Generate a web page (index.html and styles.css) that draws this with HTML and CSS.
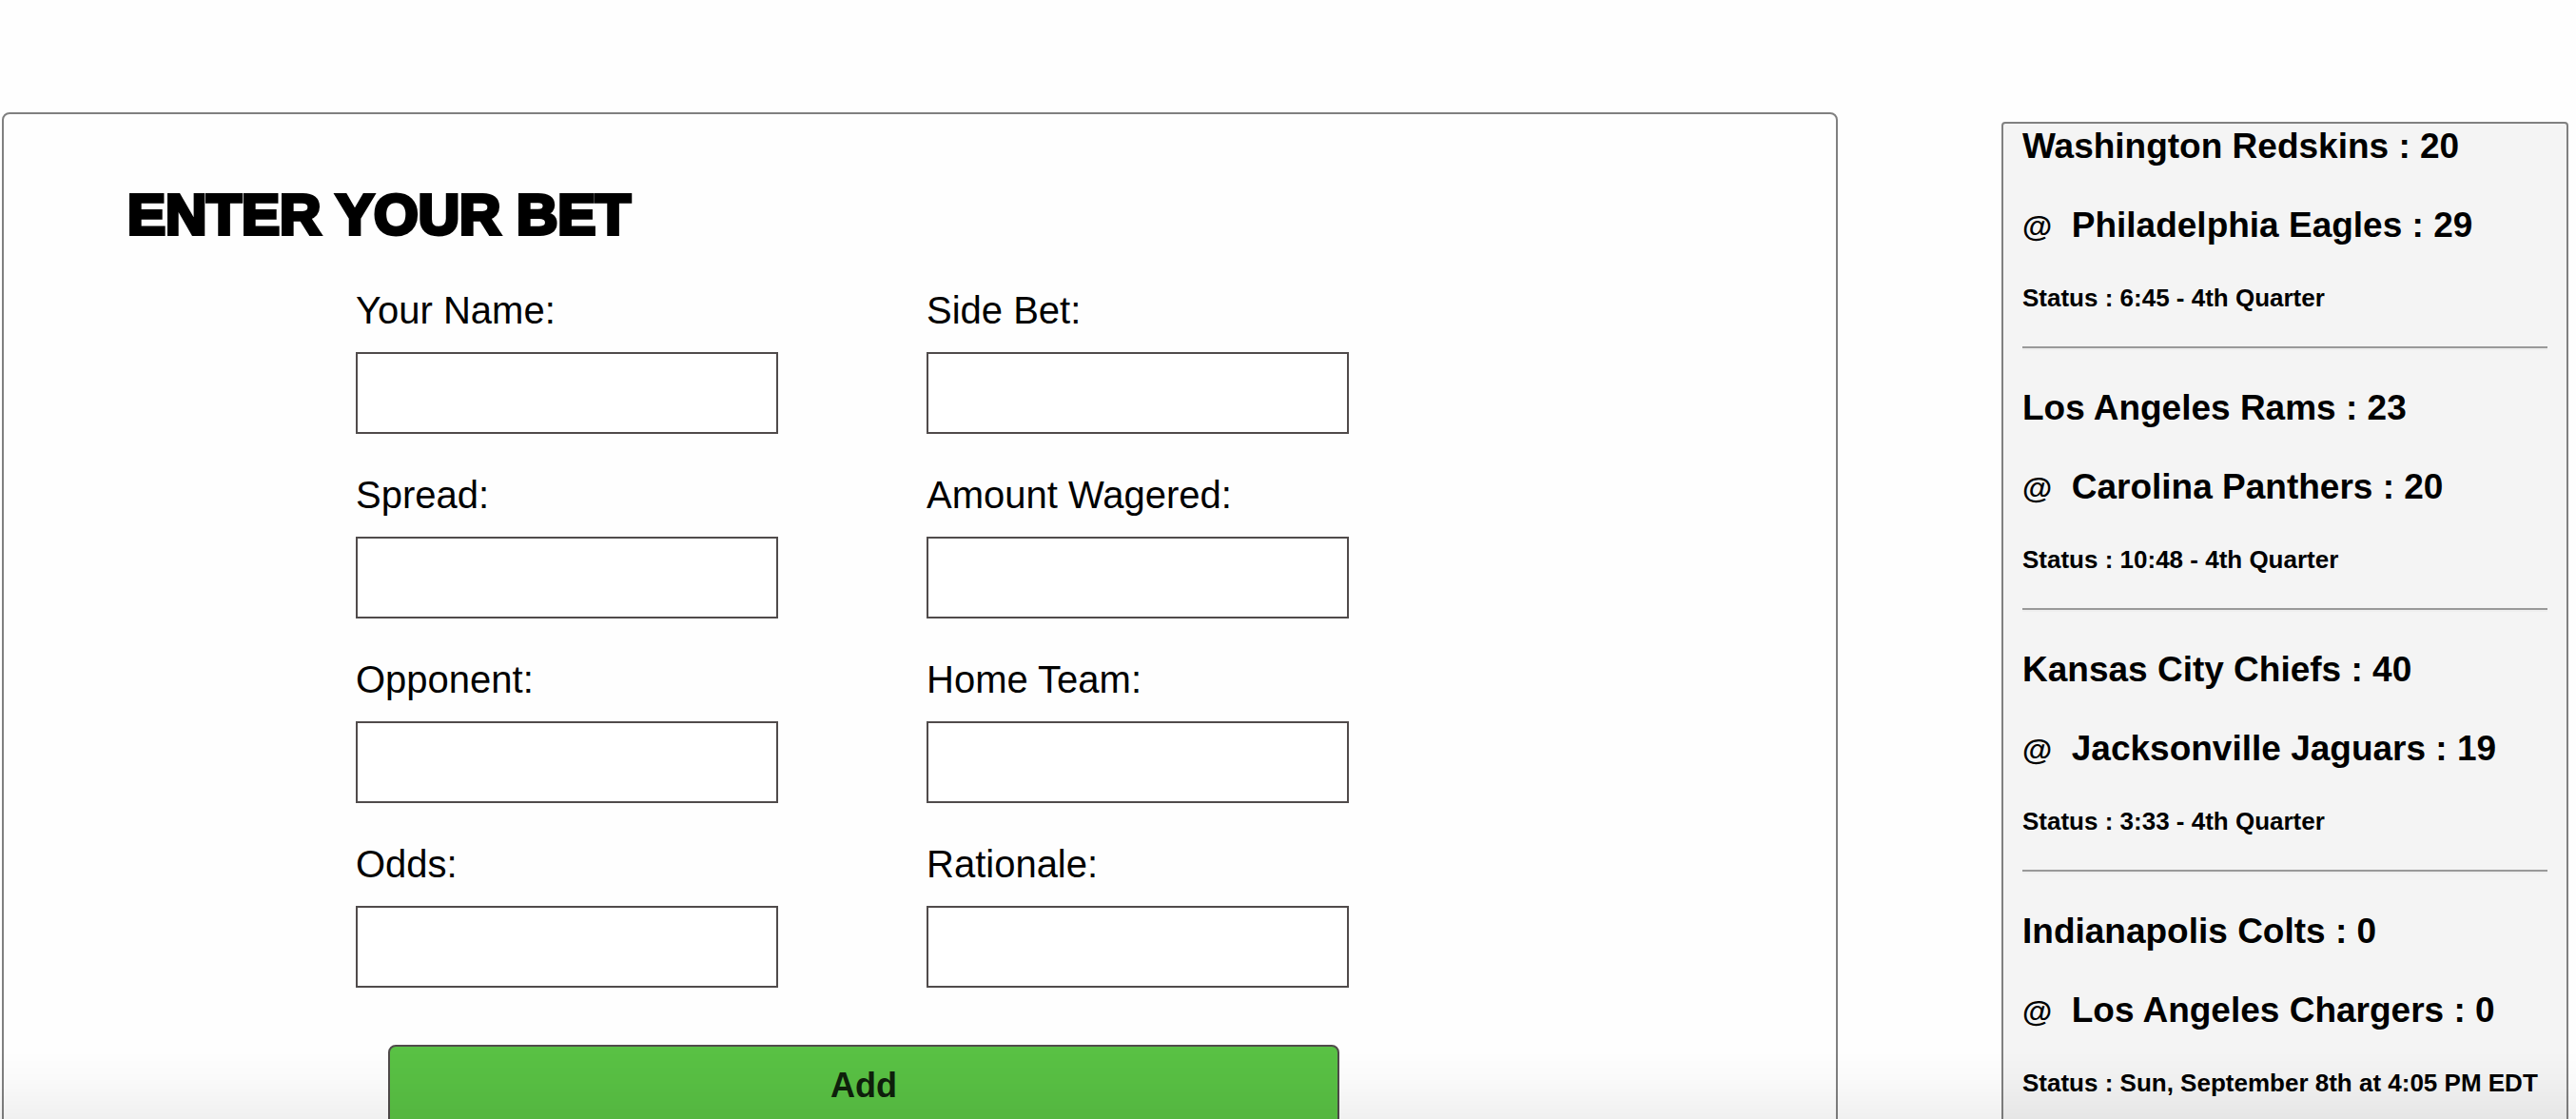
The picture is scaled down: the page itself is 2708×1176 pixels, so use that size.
FILE: index.html
```html
<!DOCTYPE html>
<html lang="en">
<head>
<meta charset="utf-8">
<meta name="viewport" content="width=device-width, initial-scale=1">
<title>Enter Your Bet</title>
<link rel="stylesheet" href="styles.css">
</head>
<body>
<div class="page">
  <main class="bet-card">
    <h1 class="bet-title">ENTER YOUR BET</h1>
    <form class="bet-form">
      <div class="fields">
        <div class="field"><label for="name">Your Name:</label><input id="name" type="text"></div>
        <div class="field"><label for="side">Side Bet:</label><input id="side" type="text"></div>
        <div class="field"><label for="spread">Spread:</label><input id="spread" type="text"></div>
        <div class="field"><label for="amount">Amount Wagered:</label><input id="amount" type="text"></div>
        <div class="field"><label for="opponent">Opponent:</label><input id="opponent" type="text"></div>
        <div class="field"><label for="home">Home Team:</label><input id="home" type="text"></div>
        <div class="field"><label for="odds">Odds:</label><input id="odds" type="text"></div>
        <div class="field"><label for="rationale">Rationale:</label><input id="rationale" type="text"></div>
      </div>
      <button class="add-button" type="button">Add</button>
    </form>
  </main>
  <aside class="scores">
    <section class="game">
      <h3>Washington Redskins : 20</h3>
      <h3><span class="at">@</span> &nbsp;Philadelphia Eagles : 29</h3>
      <h5>Status : 6:45 - 4th Quarter</h5>
      <hr>
    </section>
    <section class="game">
      <h3>Los Angeles Rams : 23</h3>
      <h3><span class="at">@</span> &nbsp;Carolina Panthers : 20</h3>
      <h5>Status : 10:48 - 4th Quarter</h5>
      <hr>
    </section>
    <section class="game">
      <h3>Kansas City Chiefs : 40</h3>
      <h3><span class="at">@</span> &nbsp;Jacksonville Jaguars : 19</h3>
      <h5>Status : 3:33 - 4th Quarter</h5>
      <hr>
    </section>
    <section class="game">
      <h3>Indianapolis Colts : 0</h3>
      <h3><span class="at">@</span> &nbsp;Los Angeles Chargers : 0</h3>
      <h5>Status : Sun, September 8th at 4:05 PM EDT</h5>
      <hr>
    </section>
  </aside>
</div>
</body>
</html>
```
FILE: styles.css
```css
* {
  box-sizing: border-box;
}

body {
  margin: 0;
  height: 100vh;
  overflow: auto;
  scrollbar-width: none;
  background: #fefefe;
  color: #000;
  font-family: "Liberation Sans", Arial, sans-serif;
}

/* soft shade along the bottom edge of the window */
body::after {
  content: "";
  position: fixed;
  inset: auto 0 0 0;
  height: 72px;
  background: linear-gradient(rgba(0, 0, 0, 0), rgba(0, 0, 0, 0.015) 40%, rgba(0, 0, 0, 0.055));
  pointer-events: none;
}

.page {
  display: grid;
  grid-template-columns: 1930fr 596fr;
  column-gap: 172px;
  align-items: start;
  padding: 118px 8px 40px 2px;
}

.bet-card {
  padding: 70px 130px 60px;
  border: 2px solid #808080;
  border-radius: 8px;
}

.bet-title {
  margin: 0;
  font-size: 60px;
  font-weight: 700;
  line-height: 72px;
  -webkit-text-stroke: 4px #000;
}

.bet-form {
  padding: 42px 0 0 240px;
}

.fields {
  display: grid;
  grid-template-columns: repeat(2, 444px);
  column-gap: 156px;
  row-gap: 42px;
}

.field {
  display: flex;
  flex-direction: column;
  gap: 22px;
}

.field label {
  font-size: 40px;
  line-height: 44px;
}

.field input {
  height: 86px;
  padding: 0 20px;
  border: 2px solid #504b4b;
  background: #fff;
  font: 36px "Liberation Sans", Arial, sans-serif;
}

.add-button {
  display: block;
  width: 1000px;
  height: 86px;
  margin: 60px 0 0 34px;
  border: 2px solid #504b4b;
  border-radius: 8px;
  background: #59c144;
  color: #0f210c;
  font: bold 36px "Liberation Sans", Arial, sans-serif;
}

.scores {
  margin-top: 10px;
  padding: 2px 20px 20px;
  border: 2px solid #808080;
  border-radius: 4px;
  background: #f4f4f4;
}

.game h3 {
  margin: 0 0 39px;
  font-size: 37px;
  line-height: 44px;
  white-space: nowrap;
}

.game .at {
  font-size: 32px;
  line-height: 1;
}

.game h5 {
  margin: 0 0 36px;
  font-size: 26px;
  line-height: 30px;
  white-space: nowrap;
}

.game hr {
  margin: 0 0 39px;
  height: 4px;
  border: solid;
  border-width: 2px 0;
  border-color: #999 transparent #eee;
}
```
